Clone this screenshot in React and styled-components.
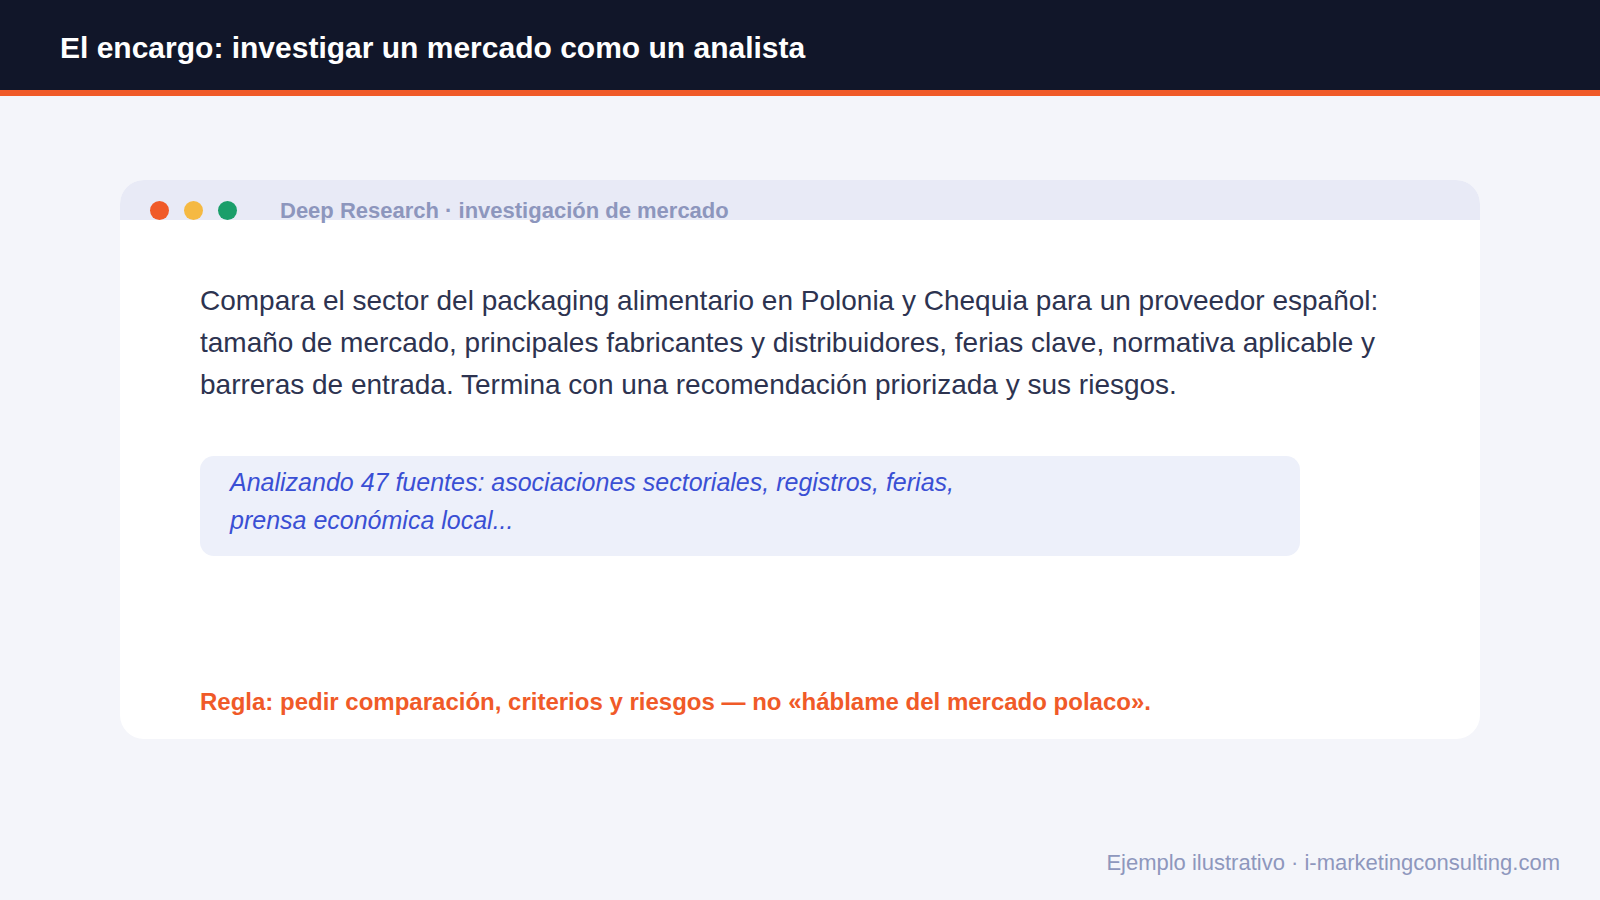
import React from 'react'
import styled, { createGlobalStyle } from 'styled-components'

const GlobalStyle = createGlobalStyle`
	* {
		box-sizing: border-box;
	}
	html, body {
		margin: 0;
		padding: 0;
		background: #f4f5fa;
		font-family: 'Liberation Sans', Arial, sans-serif;
	}
`

const PageStyled = styled.div`
	height: 100vh;
	display: flex;
	flex-direction: column;
`

const HeaderStyled = styled.header`
	height: 96px;
	background: #111629;
	border-bottom: 6px solid #f05a28;
	display: flex;
	align-items: center;
	padding: 6px 60px 0;
	h1 {
		margin: 0;
		color: #ffffff;
		font-size: 30px;
		font-weight: 700;
	}
`

const MainStyled = styled.main`
	flex: 1;
	padding: 84px 120px 0;
`

const WindowStyled = styled.div`
	background: #ffffff;
	border-radius: 24px;
	overflow: hidden;
`

const TitleBarStyled = styled.div`
	height: 40px;
	background: #e8eaf6;
	display: flex;
	align-items: center;
	padding: 20px 30px 0;
	span {
		margin-left: 28px;
		margin-top: 2px;
		font-size: 22px;
		font-weight: 700;
		color: #8d96bd;
		white-space: nowrap;
		position: relative;
		z-index: 1;
	}
`

const DotStyled = styled.i`
	width: 19px;
	height: 19px;
	border-radius: 50%;
	background: ${props => props.color};
	margin-right: 15px;
	flex-shrink: 0;
`

const BodyStyled = styled.div`
	padding: 60px 80px 22px;
`

const PromptStyled = styled.p`
	margin: 0 0 50px;
	font-size: 28px;
	line-height: 1.5;
	color: #2d3350;
`

const ProgressStyled = styled.div`
	max-width: 1100px;
	background: #edf0fa;
	border-radius: 14px;
	padding: 8px 30px 17px;
	p {
		margin: 0;
		max-width: 780px;
		font-size: 25px;
		line-height: 1.5;
		font-style: italic;
		color: #3a4fd4;
	}
`

const RuleStyled = styled.p`
	margin: 130px 0 0;
	font-size: 24px;
	line-height: 1.3;
	font-weight: 700;
	color: #f05a28;
`

const FooterStyled = styled.footer`
	padding: 0 40px 24px;
	text-align: right;
	font-size: 22px;
	color: #8e97bd;
`

export default function App() {
	return (
		<PageStyled>
			<GlobalStyle />
			<HeaderStyled>
				<h1>El encargo: investigar un mercado como un analista</h1>
			</HeaderStyled>
			<MainStyled>
				<WindowStyled>
					<TitleBarStyled>
						<DotStyled color="#f05a28" />
						<DotStyled color="#f5b942" />
						<DotStyled color="#1a9e6a" />
						<span>Deep Research · investigación de mercado</span>
					</TitleBarStyled>
					<BodyStyled>
						<PromptStyled>
							Compara el sector del packaging alimentario en Polonia y Chequia para un
							proveedor español: tamaño de mercado, principales fabricantes y
							distribuidores, ferias clave, normativa aplicable y barreras de entrada.
							Termina con una recomendación priorizada y sus riesgos.
						</PromptStyled>
						<ProgressStyled>
							<p>
								Analizando 47 fuentes: asociaciones sectoriales, registros, ferias,
								prensa económica local...
							</p>
						</ProgressStyled>
						<RuleStyled>
							Regla: pedir comparación, criterios y riesgos — no «háblame del mercado
							polaco».
						</RuleStyled>
					</BodyStyled>
				</WindowStyled>
			</MainStyled>
			<FooterStyled>Ejemplo ilustrativo · i-marketingconsulting.com</FooterStyled>
		</PageStyled>
	)
}
